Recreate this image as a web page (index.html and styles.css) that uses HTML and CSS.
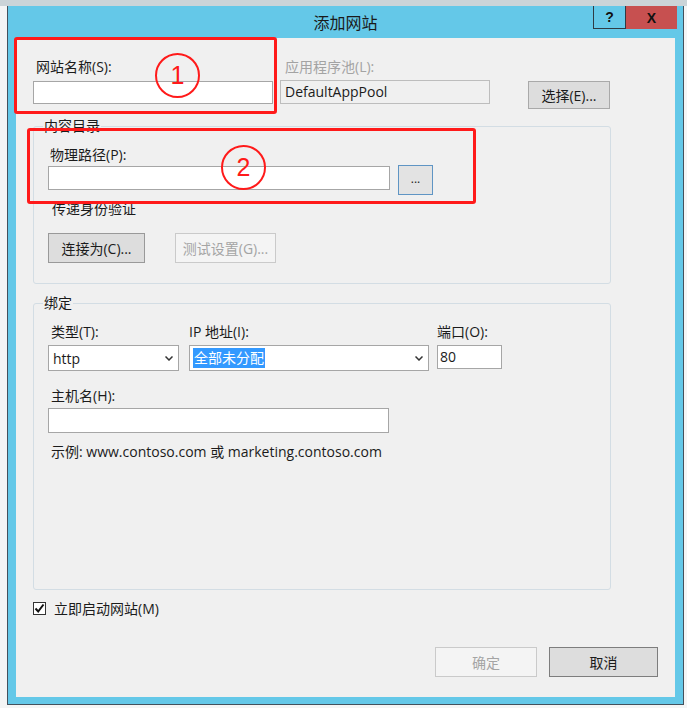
FILE: index.html
```html
<!DOCTYPE html>
<html lang="zh-CN">
<head>
<meta charset="utf-8">
<title>添加网站</title>
<link rel="stylesheet" href="styles.css">
</head>
<body>
<div class="desktop">
  <div class="window">
    <div class="titlebar">
      <div class="spacer"></div>
      <div class="title">添加网站</div>
      <div class="controls">
        <div class="help">?</div>
        <div class="close">X</div>
      </div>
    </div>
    <div class="client">
      <div class="row1">
        <div class="col-name">
          <div class="lbl">网站名称(S):</div>
          <div class="textbox tb-name"></div>
        </div>
        <div class="col-pool">
          <div class="lbl lbl-disabled">应用程序池(L):</div>
          <div class="readonly">DefaultAppPool</div>
        </div>
        <div class="col-select">
          <div class="btn btn-select">选择(E)...</div>
        </div>
      </div>

      <fieldset class="group fs1">
        <legend>内容目录</legend>
        <div class="inner">
          <div class="lbl lbl-path">物理路径(P):</div>
          <div class="path-row">
            <div class="textbox tb-path"></div>
            <div class="btn btn-browse">...</div>
          </div>
          <div class="lbl lbl-auth">传递身份验证</div>
          <div class="auth-row">
            <div class="btn btn-connect">连接为(C)...</div>
            <div class="btn btn-disabled btn-test">测试设置(G)...</div>
          </div>
        </div>
      </fieldset>

      <fieldset class="group fs2">
        <legend>绑定</legend>
        <div class="inner">
          <div class="bind-row">
            <div class="col-type">
              <div class="lbl lbl-type">类型(T):</div>
              <div class="select sel-type"><span>http</span><svg class="chev" width="8" height="5" viewBox="0 0 8 5"><path d="M0.5 0.5 L4 4 L7.5 0.5" fill="none" stroke="#333" stroke-width="1.5"/></svg></div>
            </div>
            <div class="col-ip">
              <div class="lbl">IP 地址(I):</div>
              <div class="select sel-ip"><span class="selected">全部未分配</span><svg class="chev" width="8" height="5" viewBox="0 0 8 5"><path d="M0.5 0.5 L4 4 L7.5 0.5" fill="none" stroke="#333" stroke-width="1.5"/></svg></div>
            </div>
            <div class="col-port">
              <div class="lbl">端口(O):</div>
              <div class="textbox tb-port">80</div>
            </div>
          </div>
          <div class="lbl lbl-host">主机名(H):</div>
          <div class="textbox tb-host"></div>
          <div class="lbl lbl-example">示例: www.contoso.com 或 marketing.contoso.com</div>
        </div>
      </fieldset>

      <div class="check-row">
        <div class="checkbox"><svg width="11" height="11" viewBox="0 0 11 11"><path d="M1.5 5.5 L4.2 8.5 L9.5 1.5" fill="none" stroke="#111" stroke-width="2"/></svg></div>
        <span>立即启动网站(M)</span>
      </div>

      <div class="btns">
        <div class="btn btn-disabled btn-ok">确定</div>
        <div class="btn btn-cancel">取消</div>
      </div>

      <div class="hl hl1"></div>
      <div class="hl hl2"></div>
      <div class="mark mark1">1</div>
      <div class="mark mark2">2</div>
    </div>
  </div>
</div>
</body>
</html>
```

FILE: styles.css
```css
* { box-sizing: border-box; }
html, body { margin: 0; padding: 0; }
body {
  width: 687px;
  height: 708px;
  overflow: hidden;
  background: #f4f5f5;
  font-family: "Open Sans", "Noto Sans CJK SC", sans-serif;
  font-size: 14px;
  color: #1b1b1b;
}
.desktop {
  height: 708px;
  padding: 6px 0 0 7px;
  background: linear-gradient(#cbd4d8, #cbd4d8) top left / 100% 6px no-repeat, #f4f5f5;
}
.window {
  width: 677px;
  height: 699px;
  background: #64c8e8;
  border: 1px solid #44515c;
  border-top: 0;
  display: flex;
  flex-direction: column;
}
.titlebar {
  height: 32px;
  display: grid;
  grid-template-columns: 1fr auto 1fr;
  align-items: start;
}
.title {
  line-height: 32px;
  font-size: 16px;
  font-family: "Noto Sans CJK SC", sans-serif;
  color: #1a1a1a;
}
.controls {
  justify-self: end;
  display: flex;
  margin-right: 6px;
}
.help {
  width: 33px;
  height: 23px;
  border: 1px solid #2f3b44;
  border-top: 0;
  display: flex;
  align-items: center;
  justify-content: center;
  font-family: "Liberation Sans", sans-serif;
  font-weight: bold;
  font-size: 14px;
  color: #111;
}
.close {
  width: 51px;
  height: 23px;
  background: #c75050;
  display: flex;
  align-items: center;
  justify-content: center;
  font-family: "Liberation Sans", sans-serif;
  font-weight: bold;
  font-size: 14px;
  color: #111;
}
.client {
  position: relative;
  margin: 0 8px;
  height: 659px;
  background: #f0f0f0;
  padding: 21px 17px 0 17px;
}
.lbl {
  height: 16px;
  line-height: 16px;
  white-space: nowrap;
}
.lbl-disabled { color: #a3a3a3; }
.textbox {
  background: #fff;
  border: 1px solid #a6a6a6;
}
.row1 {
  display: flex;
  align-items: flex-start;
}
.col-name { width: 240px; margin-right: 7px; }
.col-name .lbl { padding-left: 3px; margin-bottom: 6px; }
.tb-name { height: 23px; }
.col-pool { width: 210px; }
.col-pool .lbl { padding-left: 5px; margin-bottom: 5px; }
.readonly {
  height: 24px;
  line-height: 22px;
  padding-left: 4px;
  border: 1px solid #bdbdbd;
  background: #f0f0f0;
}
.col-select { margin-left: 38px; padding-top: 22px; }
.btn {
  display: flex;
  align-items: center;
  justify-content: center;
  background: #dddddd;
  border: 1px solid #a9a9a9;
  white-space: nowrap;
}
.btn-select { width: 82px; height: 28px; }
.btn-disabled {
  background: #f4f4f4;
  border-color: #cacaca;
  color: #a4a4a4;
}
.group {
  margin: 0;
  padding: 0;
  min-width: 0;
  width: 578px;
  border: 1px solid #d3dde4;
  border-radius: 3px;
}
.group legend {
  margin-left: 9px;
  padding: 0 1px;
  line-height: 16px;
}
.fs1 { margin-top: 9px; }
.fs1 .inner { padding: 13px 0 20px 14px; }
.lbl-path { padding-left: 2px; margin-bottom: 3px; }
.path-row { display: flex; align-items: flex-start; }
.tb-path { width: 342px; height: 24px; }
.btn-browse {
  width: 35px;
  height: 30px;
  margin-left: 8px;
  margin-top: -1px;
  background: #e3e3e3;
  border-color: #5f95c4;
  font-size: 12px;
  padding-bottom: 3px;
}
.lbl-auth { margin-top: 6px; padding-left: 4px; }
.auth-row { display: flex; margin-top: 16px; }
.btn-connect { width: 97px; height: 30px; border-color: #999; }
.btn-test { width: 101px; height: 30px; margin-left: 30px; }
.fs2 { margin-top: 11px; height: 295px; }
.fs2 .inner { padding: 13px 0 0 14px; }
.bind-row { display: flex; align-items: flex-start; }
.col-type { width: 131px; }
.col-type .lbl { padding-left: 3px; }
.col-ip { width: 240px; margin-left: 10px; }
.col-port { width: 65px; margin-left: 8px; }
.bind-row .lbl { margin-bottom: 5px; }
.select {
  height: 26px;
  display: flex;
  align-items: center;
  justify-content: space-between;
  background: #fff;
  border: 1px solid #a6a6a6;
  padding: 0 5px 0 4px;
}
.sel-ip { padding-left: 3px; }
.selected {
  background: #3399ff;
  color: #fff;
  line-height: 20px;
  padding: 0 1px;
}
.tb-port {
  height: 24px;
  line-height: 22px;
  padding-left: 2px;
}
.lbl-host { margin-top: 17px; padding-left: 3px; margin-bottom: 4px; }
.tb-host { width: 341px; height: 25px; }
.lbl-example { margin-top: 11px; padding-left: 3px; }
.check-row {
  display: flex;
  align-items: center;
  height: 16px;
  margin-top: 10px;
}
.checkbox {
  width: 13px;
  height: 13px;
  background: #fff;
  border: 1px solid #333;
  display: flex;
  align-items: center;
  justify-content: center;
  margin-right: 8px;
}
.checkbox svg { display: block; }
.btns {
  display: flex;
  justify-content: flex-end;
  margin-top: 31px;
  gap: 12px;
}
.btn-ok { width: 102px; height: 30px; }
.btn-cancel { width: 109px; height: 30px; border-color: #7d7d7d; }
.hl {
  position: absolute;
  border: 3px solid #ff1a1a;
  border-radius: 3px;
}
.hl1 { left: -2px; top: -1px; width: 263px; height: 77px; }
.hl2 { left: 11px; top: 90px; width: 449px; height: 76px; }
.mark {
  position: absolute;
  width: 45px;
  height: 45px;
  border: 2px solid #ff1a1a;
  border-radius: 50%;
  color: #ff1a1a;
  display: flex;
  align-items: center;
  justify-content: center;
  font-family: "Liberation Sans", sans-serif;
  font-size: 25px;
}
.mark1 { left: 139px; top: 15px; }
.mark2 { left: 205px; top: 107px; }
```
